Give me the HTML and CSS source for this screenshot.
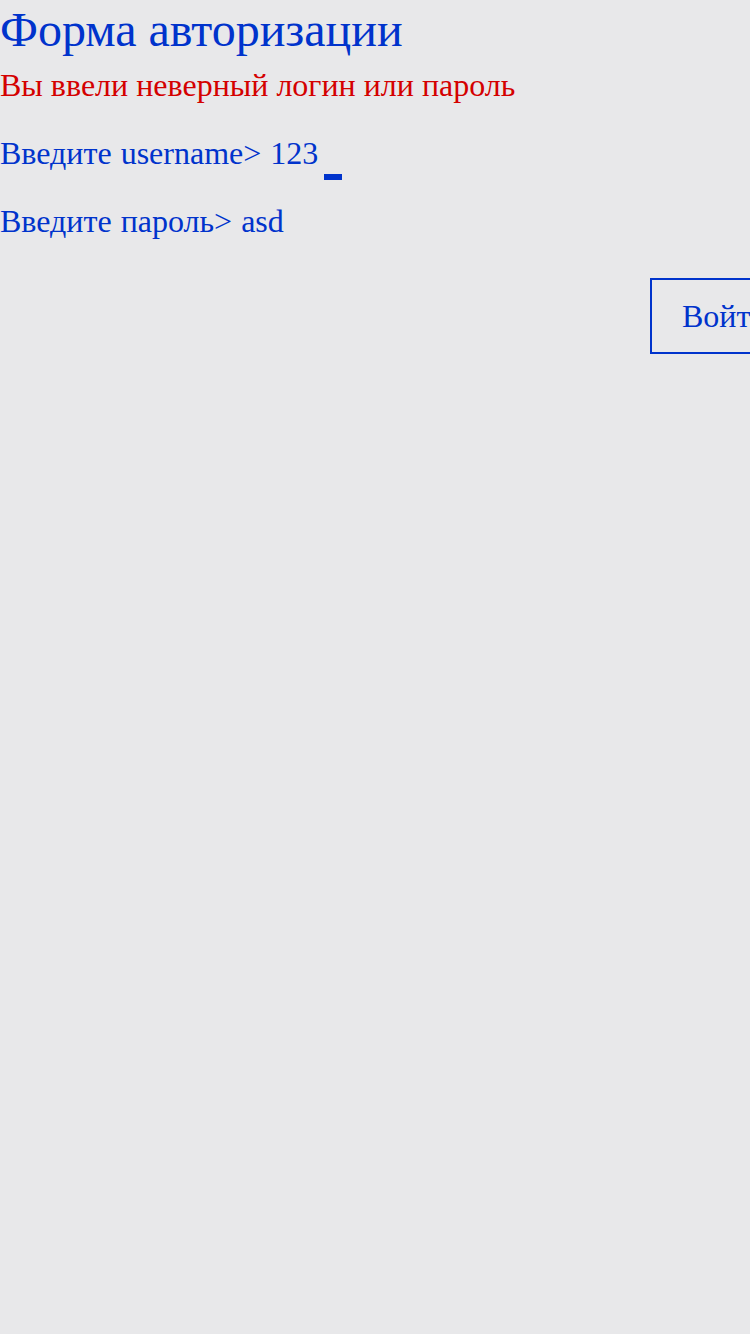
FILE: index.html
```html
<!DOCTYPE html>
<html lang="ru">
<head>
<meta charset="utf-8">
<title>Форма авторизации</title>
<link rel="stylesheet" href="styles.css">
</head>
<body>
<div class="page">
  <h1 class="title">Форма авторизации</h1>
  <p class="error">Вы ввели неверный логин или пароль</p>
  <div class="field">
    <span class="prompt">Введите username&gt; 123</span><span class="cursor"></span>
  </div>
  <div class="field">
    <span class="prompt">Введите пароль&gt; asd</span>
  </div>
  <div class="actions">
    <button class="btn" type="button">Войти</button>
  </div>
</div>
</body>
</html>
```
FILE: styles.css
```css
html, body {
  margin: 0;
  padding: 0;
  background: #e8e8ea;
  overflow: hidden;
}
body {
  width: 750px;
  height: 1334px;
  font-family: "Liberation Serif", "Times New Roman", serif;
  color: #0033cc;
}
.page {
  display: flex;
  flex-direction: column;
}
.title {
  margin: 0;
  font-weight: normal;
  font-size: 48px;
  line-height: 56px;
  padding-top: 2px;
}
.error {
  margin: 0;
  margin-top: -1px;
  color: #d40000;
  font-size: 32px;
  line-height: 56px;
}
.field {
  display: flex;
  align-items: flex-end;
  font-size: 32px;
  line-height: 36px;
  margin-top: 22px;
  word-spacing: 1px;
}
.field + .field {
  margin-top: 32px;
}
.cursor {
  display: inline-block;
  width: 18px;
  height: 6px;
  background: #0033cc;
  margin-left: 6px;
  margin-bottom: -9px;
}
.actions {
  display: flex;
  padding-left: 650px;
  margin-top: 39px;
}
.btn {
  flex: none;
  font-family: "Liberation Serif", "Times New Roman", serif;
  font-size: 32px;
  color: #0033cc;
  background: transparent;
  border: 2px solid #0033cc;
  border-radius: 0;
  padding: 0 30px;
  height: 76px;
  line-height: 72px;
}
```
